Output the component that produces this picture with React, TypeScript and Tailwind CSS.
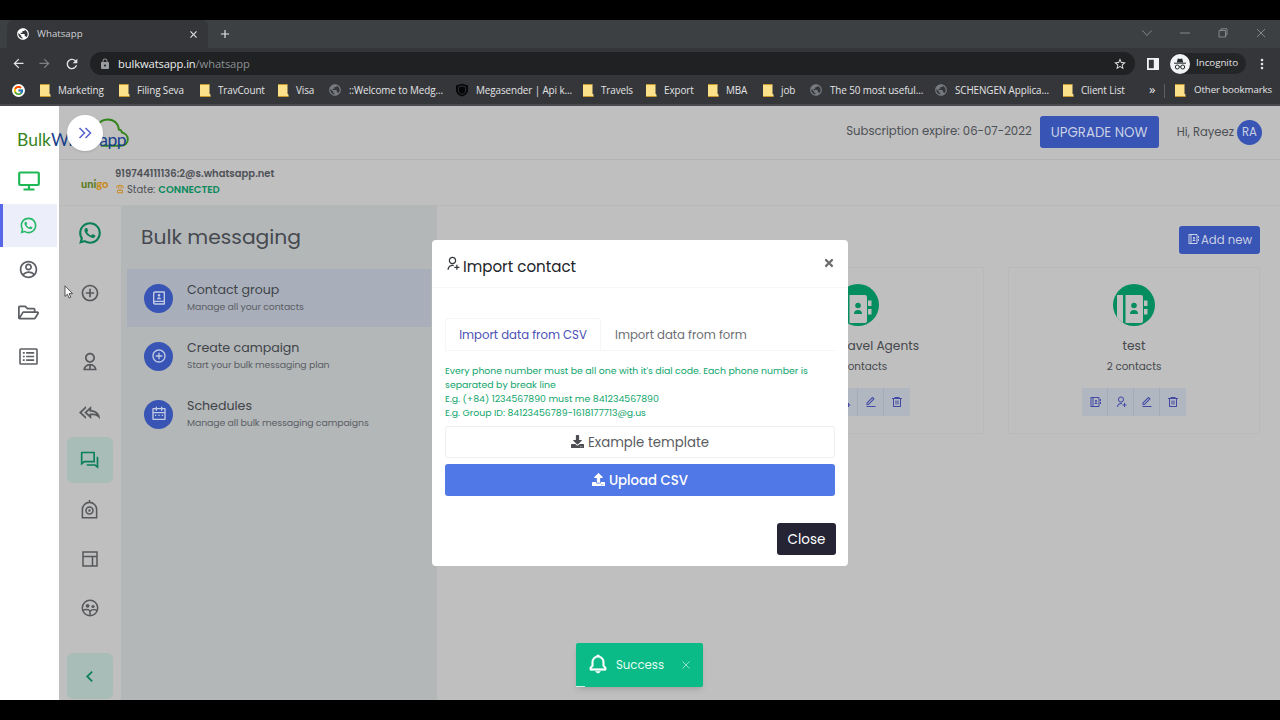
import type { ReactNode } from 'react'
import clsx from 'clsx'
import {
  RiAccountCircleLine,
  RiAddCircleLine,
  RiAddLine,
  RiArrowLeftLine,
  RiArrowLeftSLine,
  RiArrowRightLine,
  RiCalendar2Line,
  RiCloseLine,
  RiContactsBook2Line,
  RiContactsBookLine,
  RiDeleteBin6Line,
  RiEditLine,
  RiQuestionAnswerLine,
  RiReplyAllLine,
  RiRouterLine,
  RiUser2Line,
  RiUserAddLine,
  RiWhatsappLine,
} from 'react-icons/ri'
import { FaDownload, FaRegFolderOpen, FaTimes, FaUpload } from 'react-icons/fa'
import { MdLock, MdMoreVert, MdPublic, MdRefresh, MdStarBorder } from 'react-icons/md'
import { BiBell } from 'react-icons/bi'
import { FcGoogle } from 'react-icons/fc'

type Bookmark = {
  label: string
  icon: 'folder' | 'globe' | 'shield'
  className: string
}

const bookmarks: Bookmark[] = [
  { label: 'Marketing', icon: 'folder', className: 'w-[79px]' },
  { label: 'Filing Seva', icon: 'folder', className: 'w-[81px]' },
  { label: 'TravCount', icon: 'folder', className: 'w-[78px]' },
  { label: 'Visa', icon: 'folder', className: 'w-[52px]' },
  { label: '::Welcome to Medg...', icon: 'globe', className: 'w-[127px]' },
  { label: 'Megasender | Api k...', icon: 'shield', className: 'w-[126px]' },
  { label: 'Travels', icon: 'folder', className: 'w-[63px]' },
  { label: 'Export', icon: 'folder', className: 'w-[62px]' },
  { label: 'MBA', icon: 'folder', className: 'w-[55px]' },
  { label: 'job', icon: 'folder', className: 'w-[48px]' },
  { label: 'The 50 most useful...', icon: 'globe', className: 'w-[125px]' },
  { label: 'SCHENGEN Applica...', icon: 'globe', className: 'w-[127px]' },
  { label: 'Client List', icon: 'folder', className: 'w-[86px]' },
]

const BookmarkIcon = ({ icon }: { icon: Bookmark['icon'] }) => {
  if (icon === 'globe') {
    return <MdPublic className="-ml-0.5 size-[14px] shrink-0 text-[#777b7f]" />
  }
  if (icon === 'shield') {
    return (
      <svg viewBox="0 0 14 14" className="-ml-0.5 size-[14px] shrink-0">
        <path d="M1 2.5 7 .7l6 1.8V7c0 3-2.500 5.300-6 6.600C3.500 12.300 1 10 1 7Z" fill="#050607" />
        <path d="M3.300 4 7 2.900 10.700 4v3c0 2-1.500 3.600-3.700 4.500C4.800 10.600 3.300 9 3.300 7Z" fill="none" stroke="#3b3e41" strokeWidth=".8" />
      </svg>
    )
  }
  return (
    <svg viewBox="0 0 11 13" className="h-[13px] w-[11px] shrink-0">
      <path d="M0 .5h9.500v9.300l1 .6v2.100H0Z" fill="#fbe28a" />
      <path d="M0 .5h9.500M0 12.500h10.500" stroke="#c99a26" strokeWidth=".9" />
    </svg>
  )
}

const Incognito = () => (
  <svg viewBox="0 0 20 20" className="size-[20px]">
    <circle cx="10" cy="10" r="10" fill="#f1f3f4" />
    <path d="m6.800 8.500 1-4 2.200.5 2.200-.5 1 4Z" fill="#25282b" />
    <path d="M4 9.200h12" stroke="#25282b" strokeWidth="1" />
    <g fill="none" stroke="#25282b" strokeWidth="1">
      <circle cx="7.300" cy="13" r="2" />
      <circle cx="12.700" cy="13" r="2" />
      <path d="M9.300 12.700q.7-.5 1.400 0" />
    </g>
  </svg>
)

const BrowserChrome = () => (
  <div className="shrink-0 bg-[#35363a] font-['Open_Sans','Noto_Sans',sans-serif] text-[#e3e4e6]">
    <div className="flex h-7 bg-[#3c4043]">
      <div className="ml-[7px] flex h-full w-[201px] items-center rounded-t-md bg-[#35363a] pl-[9px]">
        <MdPublic className="size-[14px] text-white" />
        <span className="ml-[7px] flex-1 text-[9.700px] text-[#cfd1d3]">Whatsapp</span>
        <RiCloseLine className="mr-2 size-[13px]" />
      </div>
      <RiAddLine className="mt-[7px] ml-[10px] size-[14px]" />
      <div className="mt-[6px] mr-[14px] ml-auto flex h-[14px] items-center gap-[28px] text-[#85888b]">
        <svg viewBox="0 0 10 10" className="size-[10px]" fill="none" stroke="currentColor">
          <path d="m.5 2.500 4.500 5 4.500-5" />
        </svg>
        <svg viewBox="0 0 10 10" className="size-[10px]" fill="none" stroke="currentColor">
          <path d="M0 5h10" />
        </svg>
        <svg viewBox="0 0 10 10" className="size-[10px]" fill="none" stroke="currentColor">
          <path d="M1 2.500h6.500V9H1ZM3 2V.8h6V7H8" />
        </svg>
        <svg viewBox="0 0 10 10" className="size-[10px]" fill="none" stroke="currentColor">
          <path d="m1 1 8 8M9 1 1 9" />
        </svg>
      </div>
    </div>
    <div className="flex h-[31px] items-center">
      <RiArrowLeftLine className="ml-[11px] size-[15px]" />
      <RiArrowRightLine className="ml-[11px] size-[15px] text-[#7d8084]" />
      <MdRefresh className="ml-[12px] size-[16px]" />
      <div className="ml-[10px] flex h-[23px] w-[1045px] items-center rounded-full bg-[#1f2123] pr-[8px] pl-[9px]">
        <MdLock className="size-[12px] text-[#9a9da0]" />
        <span className="ml-[7px] flex-1 pt-px text-[11.200px] tracking-[-0.11px] text-[#8d9094]">
          <span className="text-[#eceded]">bulkwatsapp.in</span>/whatsapp
        </span>
        <MdStarBorder className="size-[14px]" />
      </div>
      <svg viewBox="0 0 12 12" className="ml-[12px] size-[12px]">
        <path d="M0 0h12v12H0ZM1.800 1.800v8.400h5V1.800Z" fill="#f1f3f4" fillRule="evenodd" />
      </svg>
      <div className="ml-[11px] flex h-[21px] w-[76px] items-center rounded-full bg-[#232527]">
        <Incognito />
        <span className="ml-[6px] text-[9.800px] tracking-[-0.05px]">Incognito</span>
      </div>
      <MdMoreVert className="ml-[8px] size-[16px]" />
    </div>
    <div className="flex h-[27px] items-center border-b-2 border-[#484a4e] pb-[2px] pl-[12px] text-[9.900px] tracking-[-0.1px] whitespace-nowrap">
      <span className="mr-[15px] flex size-[13px] items-center justify-center rounded-full bg-white">
        <FcGoogle className="size-[11px]" />
      </span>
      {bookmarks.map(({ label, icon, className }) => (
        <div key={label} className={clsx('flex shrink-0 items-center gap-[7px]', className)}>
          <BookmarkIcon icon={icon} />
          <span>{label}</span>
        </div>
      ))}
      <span className="w-[15px] pb-[2px] text-[13px] leading-none">»</span>
      <span className="mr-[10px] h-[14px] w-px bg-[#5b5e62]" />
      <BookmarkIcon icon="folder" />
      <span className="ml-[8px] text-[9.700px]">Other bookmarks</span>
    </div>
  </div>
)

const MonitorIcon = () => (
  <svg viewBox="0 0 22 20" className="-mt-px h-[20px] w-[22px]" fill="none" stroke="currentColor" strokeWidth="2.200">
    <rect x="1.200" y="1.500" width="19.600" height="12.500" rx="1" />
    <path d="M5.500 18.500h11M11 14v4" />
  </svg>
)

const ListIcon = () => (
  <svg viewBox="0 0 20 18" className="h-[17px] w-[19px]" fill="none" stroke="currentColor" strokeWidth="1.700">
    <rect x="1" y="1" width="18" height="16" rx=".8" />
    <path d="M4 5.200h2M4 9h2M4 12.800h2M7.500 5.200H16M7.500 9H16M7.500 12.800H16" />
  </svg>
)

const sidebar: { icon: ReactNode; className: string }[] = [
  { icon: <MonitorIcon />, className: 'text-[#1fb855]' },
  {
    icon: <RiWhatsappLine className="size-[19px]" />,
    className: 'border-l-[3px] border-[#5867e8] bg-[#eceffa] pr-[4px] text-[#25b865]',
  },
  { icon: <RiAccountCircleLine className="size-[21px]" />, className: 'text-[#5c5f64]' },
  { icon: <FaRegFolderOpen className="size-[21px]" />, className: 'text-[#5c5f64]' },
  { icon: <ListIcon />, className: 'text-[#5c5f64]' },
]

const Sidebar = () => (
  <aside className="flex w-[59px] shrink-0 flex-col bg-white pt-[54px]">
    {sidebar.map(({ icon, className }, i) => (
      <div key={i} className={clsx('flex h-[43.700px] w-[57px] items-center justify-center', className)}>
        {icon}
      </div>
    ))}
  </aside>
)

const Brand = () => (
  <div className="absolute top-[10px] left-[17px] h-[36px] w-[114px]">
    <svg viewBox="0 0 36 30" className="absolute top-[2px] left-[76px] h-[30px] w-[36px]" fill="none">
      <path
        d="M4 12C4 5 9 1.500 15 1.500 21 1.500 25.500 5.500 25.800 11.500c1.800.4 2.900 1.300 3.200 3 3.200.8 5.800 3.500 5.800 6.700 0 4-3 6.500-7 6.500H8"
        stroke="#34851d"
        strokeWidth="1.900"
      />
    </svg>
    <div className="absolute top-[13px] left-0 font-['Lato',sans-serif] text-[17.500px] leading-[22px] tracking-[-0.400px] text-[#173f8c]">
      <span className="tracking-normal text-[#34851d]">Bulk</span>Whatsapp
    </div>
    <div className="absolute -top-[1px] left-[50px] flex size-[36px] items-center justify-center rounded-full bg-white shadow">
      <svg viewBox="0 0 14 12" className="h-[12px] w-[14px]" fill="none" stroke="#5a66d0" strokeWidth="1.600">
        <path d="m1.500 1 5 5-5 5M7.500 1l5 5-5 5" />
      </svg>
    </div>
  </div>
)

const BotIcon = ({ className }: { className?: string }) => (
  <svg viewBox="0 0 20 20" className={className} fill="none" stroke="currentColor" strokeWidth="1.600">
    <path d="M10 0v3M2.500 18.800V10a7.500 7.500 0 0 1 15 0v8.800Z" />
    <circle cx="10" cy="11" r="3.700" />
    <circle cx="10" cy="11" r=".5" fill="currentColor" />
  </svg>
)

const LayoutIcon = () => (
  <svg viewBox="0 0 16 16" className="size-[16px]" fill="none" stroke="currentColor" strokeWidth="1.500">
    <path d="M1 1h14v14H1ZM1 5.500h14M10.500 5.500V15" />
  </svg>
)

const GroupIcon = () => (
  <svg viewBox="0 0 18 18" className="size-[18px]" fill="none" stroke="currentColor" strokeWidth="1.500">
    <circle cx="9" cy="9" r="7.700" />
    <circle cx="6.600" cy="6.800" r="1.900" fill="currentColor" stroke="none" />
    <circle cx="12" cy="7.500" r="1.600" fill="currentColor" stroke="none" />
    <path d="M1.800 11.500C4 10 7.500 10 9 12v4.500M9.200 12.200c1.300-1.700 4.500-2 6.900-.8" />
  </svg>
)

const RailItem = ({
  className,
  children,
}: {
  className?: string
  children: ReactNode
}) => (
  <div className={clsx('flex w-[46px] shrink-0 items-center justify-center rounded-md', className)}>
    {children}
  </div>
)

const Rail = () => (
  <div className="flex w-[62px] shrink-0 flex-col items-center pt-[5px] pr-px text-[#56585b]">
    <RailItem className="h-[44px]">
      <RiWhatsappLine className="size-[26px] text-[#0b7f57]" />
    </RailItem>
    <RailItem className="mt-[15px] h-[46px]">
      <RiAddCircleLine className="size-[20px]" />
    </RailItem>
    <RailItem className="mt-[23px] h-[46px]">
      <RiUser2Line className="size-[20px]" />
    </RailItem>
    <RailItem className="mt-[4px] h-[46px]">
      <RiReplyAllLine className="size-[21px]" />
    </RailItem>
    <RailItem className="mt-[2px] h-[46px] bg-[#a8bcb8] text-[#0b7f57]">
      <RiQuestionAnswerLine className="size-[20px]" />
    </RailItem>
    <RailItem className="mt-[3px] h-[46px]">
      <BotIcon className="size-[19px]" />
    </RailItem>
    <RailItem className="mt-[4px] h-[46px]">
      <LayoutIcon />
    </RailItem>
    <RailItem className="mt-[3px] h-[46px]">
      <GroupIcon />
    </RailItem>
    <RailItem className="mt-[22px] h-[46px] bg-[#a8bcb8] text-[#0b7f57]">
      <RiArrowLeftSLine className="size-[21px]" />
    </RailItem>
  </div>
)

const actions = [
  { icon: RiContactsBook2Line, title: 'Contact group', text: 'Manage all your contacts', active: true },
  { icon: RiAddCircleLine, title: 'Create campaign', text: 'Start your bulk messaging plan' },
  { icon: RiCalendar2Line, title: 'Schedules', text: 'Manage all bulk messaging campaigns' },
]

const MessagingPanel = () => (
  <div className="w-[316px] shrink-0 bg-[#b3b7b8] pl-[6px] text-[#4b4e56]">
    <h1 className="h-[63px] pt-[15px] pl-[14px] text-[20.300px] leading-8 text-[#45484f]">Bulk messaging</h1>
    {actions.map(({ icon: Icon, title, text, active }) => (
      <div
        key={title}
        className={clsx('flex h-[58px] w-[304px] items-center pl-[17px]', active && 'bg-[#a9afba]')}
      >
        <span className="flex size-[29px] items-center justify-center rounded-full bg-[#3854b4] text-[#c3cbe4]">
          <Icon className="size-[16px]" />
        </span>
        <div className="ml-[14px]">
          <div className="text-[12.600px] leading-[17px] text-[#404349]">{title}</div>
          <div className="text-[9.360px] leading-[17px] tracking-[-0.1px] text-[#5b5e65]">{text}</div>
        </div>
      </div>
    ))}
  </div>
)

const groupActions = [RiContactsBookLine, RiUserAddLine, RiEditLine, RiDeleteBin6Line]

const GroupCard = ({ title, count, className }: { title: string; count: string; className?: string }) => (
  <div className="flex h-[167px] w-[252px] flex-col items-center border border-[#bababb] pt-[16px] text-[#45484d]">
    <span className="flex size-[42px] items-center justify-center overflow-hidden rounded-full bg-[#048d5e]">
      <svg viewBox="0 0 42 42" className="size-[42px]">
        <path
          d="M4 11h6v28H4ZM12.500 11h15.500a2 2 0 0 1 2 2v24a2 2 0 0 1-2 2H12.500ZM31 16.500h3.500v5.500H31ZM31 25h3.500v5.500H31Z"
          fill="#bfbfbf"
        />
        <circle cx="21" cy="21.500" r="2.800" fill="#048d5e" />
        <path d="M17 30a4 4 0 0 1 8 0Z" fill="#048d5e" />
      </svg>
    </span>
    <div className={clsx('mt-[11px] text-[12.200px] leading-[18px]', className)}>{title}</div>
    <div className="mt-[3px] text-[10.400px] leading-[17px]">{count}</div>
    <div className="mt-[13px] flex h-[28px] divide-x divide-[#a5abb9] bg-[#b1b7c1] text-[#4149a4]">
      {groupActions.map((Icon, i) => (
        <span key={i} className="flex w-[26px] items-center justify-center">
          <Icon className="size-[12px]" />
        </span>
      ))}
    </div>
  </div>
)

const Content = () => (
  <div className="flex flex-1 flex-col items-end pt-[20px] pr-[20px]">
    <button className="flex h-[28px] w-[81px] items-center justify-center gap-[2px] rounded-[3px] bg-[#3854b4] pt-[2px] text-[11.700px] text-[#c9d0e6]">
      <RiContactsBookLine className="-mt-[4px] size-[12px]" />
      Add new
    </button>
    <div className="mt-[13px] flex gap-[24px]">
      <GroupCard title="Travel Agents" count="10 contacts" className="w-[122px] text-right" />
      <GroupCard title="test" count="2 contacts" />
    </div>
  </div>
)

const Page = () => (
  <div className="flex min-w-0 flex-1 flex-col bg-[#bfbfbf]">
    <header className="flex h-[54px] shrink-0 items-center justify-end border-b border-[#b3b3b4] pr-[18px] text-[#4d5055]">
      <span className="pb-[2px] text-[11.700px]">Subscription expire: 06-07-2022</span>
      <button className="mb-px ml-[8px] h-[32px] w-[119px] rounded-[3px] bg-[#3854b4] pt-px text-[13.300px] text-[#c9d0e6]">
        UPGRADE NOW
      </button>
      <span className="ml-[18px] pt-px text-[11.600px]">Hi, Rayeez</span>
      <span className="ml-[3px] flex size-[25px] items-center justify-center rounded-full bg-[#3854b4] pt-px text-[11.700px] text-[#c9d0e6]">
        RA
      </span>
    </header>
    <div className="flex h-[46px] shrink-0 items-center border-b border-[#b8b8b9] pb-[2px] pl-[22px] text-[#4f5258]">
      <div className="w-[34px] pt-[6px] font-['Lato',sans-serif] text-[11px] font-black text-[#5c7d25]">
        uni<span className="text-[#c78a20]">go</span>
      </div>
      <div>
        <div className="text-[10px] leading-[16px] font-semibold">919744111136:2@s.whatsapp.net</div>
        <div className="flex items-center text-[10px] leading-[16px]">
          <RiRouterLine className="mr-[2px] mb-[2px] size-[10px] text-[#c78a20]" />
          State: <span className="ml-[3px] font-semibold text-[#0b8a5c]">CONNECTED</span>
        </div>
      </div>
    </div>
    <div className="flex min-h-0 flex-1">
      <Rail />
      <MessagingPanel />
      <Content />
    </div>
  </div>
)

const ImportModal = () => (
  <div className="absolute top-[134px] left-[432px] flex h-[326px] w-[416px] flex-col rounded bg-white">
    <div className="flex h-[48px] items-center border-b border-[#f7f7f9] px-[13px]">
      <RiUserAddLine className="size-[15px] text-[#34363b]" />
      <h2 className="ml-[3px] pt-[7px] text-[15.100px] text-[#222429]">Import contact</h2>
      <FaTimes className="mt-[-2px] ml-auto size-[12px] text-[#6c6c6c]" />
    </div>
    <div className="flex-1 px-[13px] pt-[30px]">
      <div className="flex h-[33px] border-b border-[#f5f5f8] pt-px text-[11.700px]">
        <div className="-mt-px flex w-[156px] items-center justify-center rounded-t border border-b-0 border-[#f5f5f8] pt-[2px] text-[#4a50b5]">
          Import data from CSV
        </div>
        <div className="flex items-center pt-[2px] pl-[14px] text-[#6c6e74]">Import data from form</div>
      </div>
      <p className="mt-[13px] text-[9.360px] leading-[14px] whitespace-nowrap text-[#0fa56c]">
        Every phone number must be all one with it's dial code. Each phone number is
        <br />
        separated by break line
        <br />
        E.g. (+84) 1234567890 must me 841234567890
        <br />
        E.g. Group ID: 84123456789-1618177713@g.us
      </p>
      <button className="mt-[6px] flex h-[32px] w-[390px] items-center justify-center gap-[4px] rounded-[3px] border border-[#efeff3] pt-px text-[13.300px] text-[#5a5c62]">
        <FaDownload className="mb-[2px] size-[13px] text-[#4c4e53]" />
        Example template
      </button>
      <button className="mt-[6px] flex h-[32px] w-[390px] items-center justify-center gap-[4px] rounded-[3px] bg-[#5078e6] pt-[2px] text-[13.300px] font-medium text-white">
        <FaUpload className="mb-[3px] size-[13px]" />
        Upload CSV
      </button>
    </div>
    <div className="flex h-[57px] justify-end pr-[12px]">
      <button className="mt-[14px] h-[32px] w-[59px] rounded-[3px] bg-[#242435] pt-[2px] text-[13.500px] text-white">
        Close
      </button>
    </div>
  </div>
)

const Toast = () => (
  <div className="absolute top-[537px] left-[576px] flex h-[44px] w-[127px] items-center rounded-[2px] bg-[#0abb87] pl-[11px] text-white shadow-md">
    <BiBell className="-mt-[2px] size-[22px]" stroke="currentColor" strokeWidth=".3" />
    <span className="ml-[7px] pt-px text-[11.700px] text-[#e4fbf2]">Success</span>
    <svg viewBox="0 0 8 8" className="mr-[13px] ml-auto size-[8px]" stroke="#8fe0c5">
      <path d="m.5.5 7 7M7.500.5l-7 7" />
    </svg>
    <span className="absolute bottom-0 left-0 h-px w-[9px] bg-[#c9f3e4]" />
  </div>
)

const Cursor = () => (
  <svg viewBox="0 0 10 14" className="absolute top-[179px] left-[64px] h-[14px] w-[10px]">
    <path d="M1 .8v10.600l2.400-2.200 1.700 3.800 1.700-.8-1.700-3.600h3.400Z" fill="#fff" stroke="#333" strokeWidth=".8" />
  </svg>
)

export default function App() {
  return (
    <div className="flex h-[720px] w-[1280px] flex-col overflow-hidden bg-black pt-5 pb-5 font-['Poppins','Inter',sans-serif]">
      <BrowserChrome />
      <div className="relative flex min-h-0 flex-1">
        <Sidebar />
        <Page />
        <Brand />
        <ImportModal />
        <Toast />
        <Cursor />
      </div>
    </div>
  )
}
